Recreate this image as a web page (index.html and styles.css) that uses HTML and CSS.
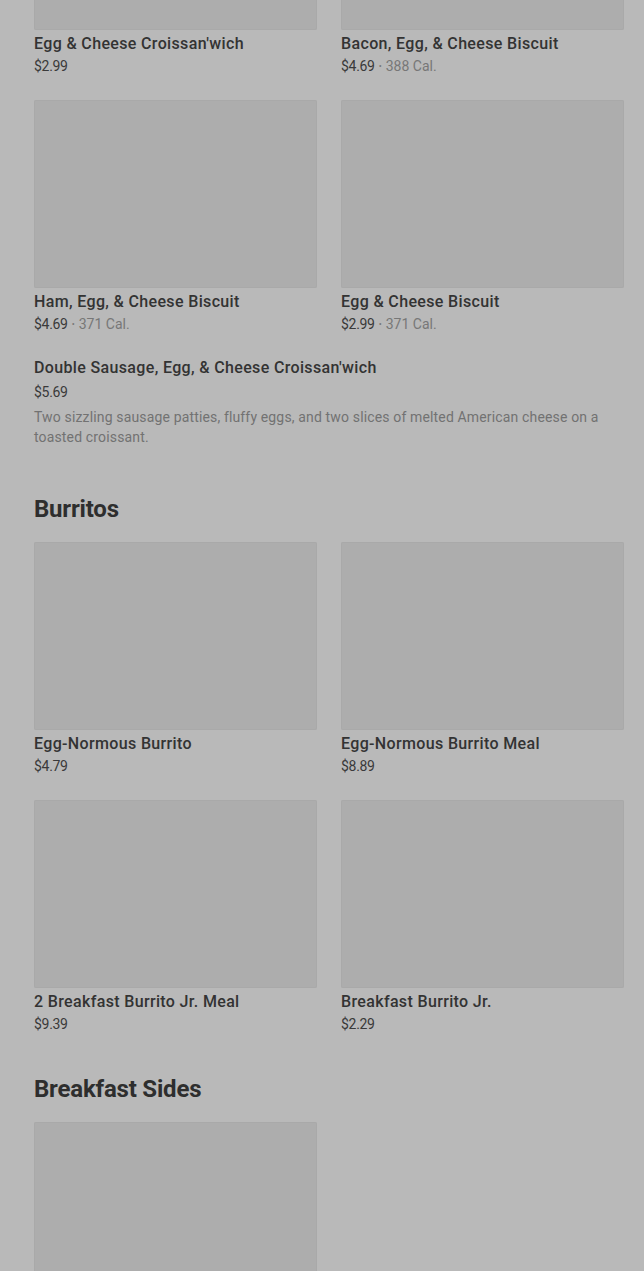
FILE: index.html
```html
<!DOCTYPE html>
<html lang="en">
<head>
<meta charset="utf-8">
<title>Menu</title>
<link rel="stylesheet" href="styles.css">
</head>
<body>
<main class="page">
  <section class="section first">
    <div class="grid">
      <article class="card">
        <div class="thumb"></div>
        <h3 class="name">Egg &amp; Cheese Croissan'wich</h3>
        <p class="meta"><span class="price">$2.99</span></p>
      </article>
      <article class="card">
        <div class="thumb"></div>
        <h3 class="name">Bacon, Egg, &amp; Cheese Biscuit</h3>
        <p class="meta"><span class="price">$4.69</span><span class="dot">•</span><span class="cal">388 Cal.</span></p>
      </article>
      <article class="card">
        <div class="thumb"></div>
        <h3 class="name">Ham, Egg, &amp; Cheese Biscuit</h3>
        <p class="meta"><span class="price">$4.69</span><span class="dot">•</span><span class="cal">371 Cal.</span></p>
      </article>
      <article class="card">
        <div class="thumb"></div>
        <h3 class="name">Egg &amp; Cheese Biscuit</h3>
        <p class="meta"><span class="price">$2.99</span><span class="dot">•</span><span class="cal">371 Cal.</span></p>
      </article>
    </div>
    <article class="wide-item">
      <h3 class="name">Double Sausage, Egg, &amp; Cheese Croissan'wich</h3>
      <p class="meta wide-price"><span class="price">$5.69</span></p>
      <p class="desc">Two sizzling sausage patties, fluffy eggs, and two slices of melted American cheese on a toasted croissant.</p>
    </article>
  </section>

  <section class="section burritos">
    <h2 class="heading">Burritos</h2>
    <div class="grid">
      <article class="card">
        <div class="thumb"></div>
        <h3 class="name">Egg-Normous Burrito</h3>
        <p class="meta"><span class="price">$4.79</span></p>
      </article>
      <article class="card">
        <div class="thumb"></div>
        <h3 class="name">Egg-Normous Burrito Meal</h3>
        <p class="meta"><span class="price">$8.89</span></p>
      </article>
      <article class="card">
        <div class="thumb"></div>
        <h3 class="name">2 Breakfast Burrito Jr. Meal</h3>
        <p class="meta"><span class="price">$9.39</span></p>
      </article>
      <article class="card">
        <div class="thumb"></div>
        <h3 class="name">Breakfast Burrito Jr.</h3>
        <p class="meta"><span class="price">$2.29</span></p>
      </article>
    </div>
  </section>

  <section class="section sides">
    <h2 class="heading">Breakfast Sides</h2>
    <div class="grid">
      <article class="card">
        <div class="thumb"></div>
      </article>
    </div>
  </section>
</main>
</body>
</html>
```

FILE: styles.css
```css
html, body {
  margin: 0;
  padding: 0;
  background: #b9b9b9;
}

body {
  font-family: Roboto, "Liberation Sans", Arial, sans-serif;
  color: #2f2f2f;
  overflow: hidden;
  height: 1271px;
}

.page {
  width: 590px;
  padding: 0 20px 0 34px;
  margin-top: -158px;
}

.grid {
  display: grid;
  grid-template-columns: 283px 283px;
  column-gap: 24px;
  row-gap: 24px;
}

.card {
  display: flex;
  flex-direction: column;
}

.thumb {
  height: 188px;
  background: #adadad;
  border-radius: 2px;
  box-shadow: inset 0 0 0 1px #a9a9a9;
}

.name {
  margin: 4px 0 0;
  font-size: 16px;
  line-height: 20px;
  font-weight: 500;
  letter-spacing: 0.35px;
  color: #333;
}

.meta {
  margin: 2px 0 0;
  font-size: 14px;
  line-height: 20px;
  display: flex;
  align-items: center;
}

.price {
  color: #3a3a3a;
  letter-spacing: -0.3px;
}

.dot {
  color: #777;
  font-size: 9px;
  margin: 0 4px;
}

.cal {
  color: #777;
}

.wide-item {
  margin-top: 24px;
}

.wide-item .name {
  margin-top: 0;
}

.wide-price {
  margin-top: 4px;
}

.desc {
  margin: 5px 0 0;
  font-size: 14px;
  line-height: 20px;
  letter-spacing: 0.15px;
  color: #727272;
}

.heading {
  margin: 0 0 17px;
  font-size: 24px;
  line-height: 32px;
  font-weight: 700;
  color: #2e2e2e;
  letter-spacing: -0.2px;
}

.burritos {
  margin-top: 46px;
}

.sides {
  margin-top: 39px;
}
```
